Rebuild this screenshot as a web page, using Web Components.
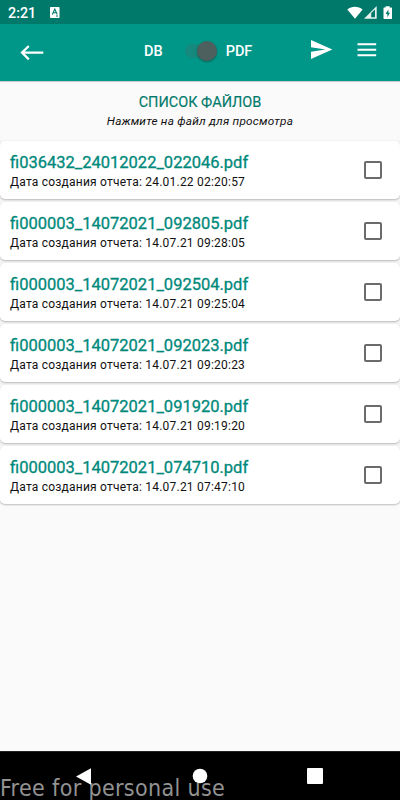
<!DOCTYPE html>
<html lang="ru">
<head>
<meta charset="utf-8">
<title>Список файлов</title>
<style>
  body {
    margin: 0;
    font-family: Roboto, "Noto Sans", sans-serif;
    background: #fafafa;
    overflow: hidden;
  }
</style>
</head>
<body>
<reports-screen></reports-screen>

<script>
class StatusBar extends HTMLElement {
  constructor() {
    super();
    this.attachShadow({ mode: 'open' });
    this.shadowRoot.innerHTML = `
      <style>
        :host {
          display: flex;
          align-items: center;
          height: 24px;
          box-sizing: border-box;
          padding: 1px 7px 0 8px;
          background: #00796b;
          color: #fff;
        }
        .time { width: 42px; font-size: 14.3px; font-weight: 500; line-height: 24px; }
        svg { display: block; }
        .system { margin-left: auto; }
      </style>
      <span class="time"><slot></slot></span>
      <svg width="10" height="11" viewBox="0 0 10 11">
        <rect width="9.5" height="11" rx=".8" fill="#fff"/>
        <path d="M2.3 7.5 4.8 2l2.4 5.5M3.2 5.8h3.2M6 9h2" fill="none" stroke="#00796b" stroke-width="1.1"/>
      </svg>
      <svg class="system" width="46" height="14" viewBox="0 0 46 14">
        <path d="M.3 3.5C4.6-.1 11.2-.1 15.6 3.5L8 12.8z" fill="#fff"/>
        <path d="M17 12.7 29.7 0v12.7z" fill="#fff" fill-opacity=".9"/>
        <path d="M24.2 11.2V7.1l3.8-3.6v7.7z" fill="#00796b"/>
        <path d="M38.6.2h4v1.3h1.7q.7 0 .7.7v10q0 .7-.7.7h-7.1q-.7 0-.7-.7v-10q0-.7.7-.7h1.4z" fill="#fff"/>
        <path d="M41.4 3.5 38.6 8h1.8v3.2L43 6.8h-1.6z" fill="#00796b"/>
      </svg>
    `;
  }
}

class ModeSwitch extends HTMLElement {
  constructor() {
    super();
    this.attachShadow({ mode: 'open' });
    this.shadowRoot.innerHTML = `
      <style>
        :host {
          display: flex;
          align-items: center;
          color: #fff;
          font-size: 14.5px;
          font-weight: 500;
          line-height: 20px;
        }
        slot { display: block; padding-top: 2px; }
        .track {
          display: flex;
          justify-content: flex-end;
          align-items: center;
          width: 32px;
          height: 14px;
          margin: 0 9px 0 22px;
          border-radius: 7px;
          background: #15897d;
        }
        .thumb {
          width: 20px;
          height: 20px;
          border-radius: 50%;
          background: #4d605e;
          box-shadow: 0 1px 2px rgba(0, 0, 0, .35);
        }
      </style>
      <slot name="off"></slot>
      <div class="track"><div class="thumb"></div></div>
      <slot name="on"></slot>
    `;
  }
}

class AppToolbar extends HTMLElement {
  constructor() {
    super();
    this.attachShadow({ mode: 'open' });
    this.shadowRoot.innerHTML = `
      <style>
        :host {
          display: flex;
          align-items: flex-start;
          height: 57px;
          box-sizing: border-box;
          padding: 15px 23px 0 20px;
          background: #009688;
          box-shadow: 0 1px 1px rgba(0, 0, 0, .18);
        }
        svg { display: block; fill: none; stroke: #fff; }
        .back { margin: 6px 100px 0 0; }
        .send { margin: 1px 0 0 auto; fill: #fff; stroke: none; }
        .menu { margin: 4px 0 0 24px; }
        ::slotted(mode-switch) { margin-top: 1px; }
      </style>
      <svg class="back" width="24" height="16" viewBox="0 0 24 16">
        <path d="M23.3 7.6H2M8.8 1 2 7.6l6.8 6.8" stroke-width="2.2"/>
      </svg>
      <slot></slot>
      <svg class="send" width="23" height="20" viewBox="0 0 23 20">
        <path d="M1 0 22.3 9.5 1 19V11.7L15.5 9.5 1 7.3z"/>
      </svg>
      <svg class="menu" width="20" height="14" viewBox="0 0 20 14">
        <path d="M.5 1.3h18.7M.5 6.8h18.7M.5 12.3h18.7" stroke-width="2.1"/>
      </svg>
    `;
  }
}

class ListHeading extends HTMLElement {
  constructor() {
    super();
    this.attachShadow({ mode: 'open' });
    this.shadowRoot.innerHTML = `
      <style>
        :host { display: block; height: 59px; box-sizing: border-box; padding-top: 13px; text-align: center; }
        .title { font-size: 14.5px; line-height: 18px; color: #00796b; -webkit-text-stroke: .15px; }
        .hint { font-size: 11.8px; font-style: italic; line-height: 18px; letter-spacing: .22px; color: #111; }
      </style>
      <div class="title"><slot></slot></div>
      <div class="hint"><slot name="hint"></slot></div>
    `;
  }
}

class FileCard extends HTMLElement {
  constructor() {
    super();
    this.attachShadow({ mode: 'open' });
  }

  connectedCallback() {
    this.shadowRoot.innerHTML = `
      <style>
        :host {
          display: flex;
          justify-content: space-between;
          align-items: center;
          height: 58px;
          box-sizing: border-box;
          padding: 0 18px 0 10px;
          border-radius: 5px;
          background: #fff;
          box-shadow: 0 1px 2px rgba(0, 0, 0, .25);
        }
        .text { padding-top: 3px; }
        .name { font-size: 16.5px; line-height: 20px; color: #00897b; -webkit-text-stroke: .3px; }
        .date { font-size: 12px; line-height: 18px; letter-spacing: .22px; color: #111; }
        .box {
          width: 18px;
          height: 18px;
          box-sizing: border-box;
          border: 2px solid #6b6b6b;
          border-radius: 2px;
        }
      </style>
      <div class="text">
        <div class="name">${this.getAttribute('name')}</div>
        <div class="date">Дата создания отчета: ${this.getAttribute('created')}</div>
      </div>
      <div class="box"></div>
    `;
  }
}

class NavBar extends HTMLElement {
  constructor() {
    super();
    this.attachShadow({ mode: 'open' });
    this.shadowRoot.innerHTML = `
      <style>
        :host {
          display: block;
          position: relative;
          height: 49px;
          box-sizing: border-box;
          border-top: 1px solid #222;
          background: #000;
        }
        .buttons {
          display: flex;
          align-items: center;
          justify-content: space-between;
          height: 48px;
          padding: 0 77px 0 76px;
          position: relative;
          z-index: 1;
        }
        svg { display: block; fill: #fff; }
        /* watermark sits behind the buttons */
        .mark {
          position: absolute;
          left: 0;
          bottom: 0;
          font: 23px/23px "DejaVu Sans Condensed", "DejaVu Sans", sans-serif;
          font-stretch: condensed;
          letter-spacing: .35px;
          white-space: nowrap;
          color: #929292;
        }
      </style>
      <div class="mark"><slot></slot></div>
      <div class="buttons">
        <svg width="16" height="17" viewBox="0 0 16 17"><path d="M0 8.5 15 .3v16.4z"/></svg>
        <svg width="16" height="16" viewBox="0 0 16 16"><circle cx="8" cy="8" r="7.3"/></svg>
        <svg width="16" height="16" viewBox="0 0 16 16"><rect width="16" height="16" rx="1"/></svg>
      </div>
    `;
  }
}

class ReportsScreen extends HTMLElement {
  constructor() {
    super();
    this.attachShadow({ mode: 'open' });
    this.files = [
      ['fi036432_24012022_022046.pdf', '24.01.22 02:20:57'],
      ['fi000003_14072021_092805.pdf', '14.07.21 09:28:05'],
      ['fi000003_14072021_092504.pdf', '14.07.21 09:25:04'],
      ['fi000003_14072021_092023.pdf', '14.07.21 09:20:23'],
      ['fi000003_14072021_091920.pdf', '14.07.21 09:19:20'],
      ['fi000003_14072021_074710.pdf', '14.07.21 07:47:10']
    ];
    this.render();
  }

  render() {
    this.shadowRoot.innerHTML = `
      <style>
        :host { display: flex; flex-direction: column; width: 400px; height: 800px; }
        .list { display: flex; flex-direction: column; gap: 3px; padding-top: 1px; background: #f5f5f5; }
        nav-bar { margin-top: auto; }
      </style>
      <status-bar>2:21</status-bar>
      <app-toolbar>
        <mode-switch><span slot="off">DB</span><span slot="on">PDF</span></mode-switch>
      </app-toolbar>
      <list-heading>СПИСОК ФАЙЛОВ<span slot="hint">Нажмите на файл для просмотра</span></list-heading>
      <div class="list">
        ${this.files.map(([name, created]) => `<file-card name="${name}" created="${created}"></file-card>`).join('')}
      </div>
      <nav-bar>Free for personal use</nav-bar>
    `;
  }
}

customElements.define('status-bar', StatusBar);
customElements.define('mode-switch', ModeSwitch);
customElements.define('app-toolbar', AppToolbar);
customElements.define('list-heading', ListHeading);
customElements.define('file-card', FileCard);
customElements.define('nav-bar', NavBar);
customElements.define('reports-screen', ReportsScreen);
</script>
</body>
</html>
